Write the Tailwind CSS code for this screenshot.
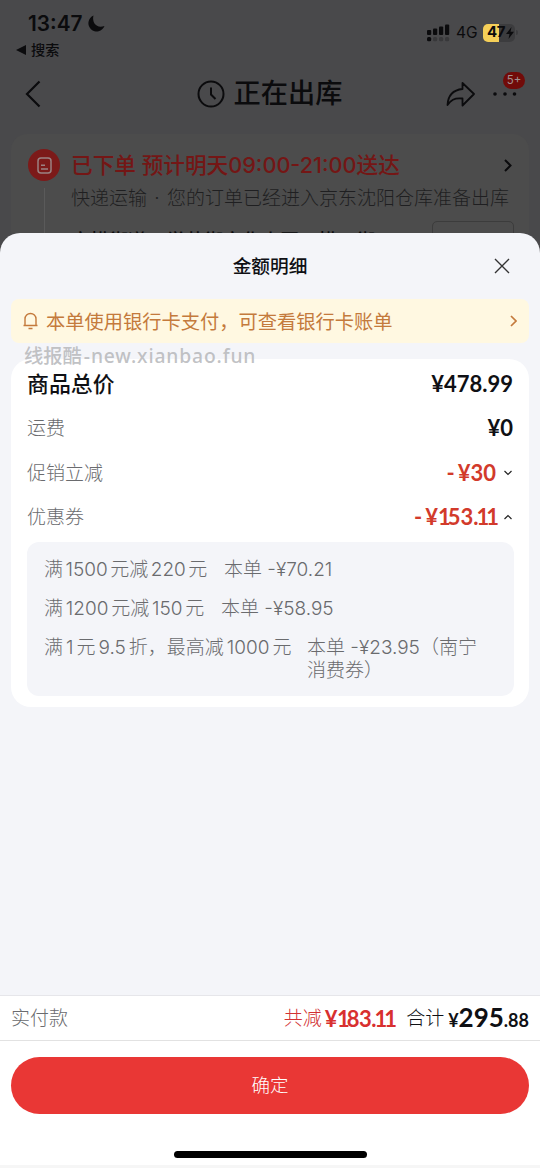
<!DOCTYPE html>
<html lang="zh-CN">
<head>
<meta charset="utf-8">
<title>金额明细</title>
<script src="https://cdn.jsdelivr.net/npm/@tailwindcss/browser@4"></script>
</head>
<body class="w-[540px] h-[1168px] overflow-hidden bg-[#49494b] flex flex-col whitespace-nowrap font-['Inter','Noto_Sans_CJK_SC',sans-serif]">
<!-- dimmed order page -->
<div class="h-[233px] shrink-0 flex flex-col text-[#0b0b0d]">
  <div class="h-[64px] shrink-0 flex justify-between">
    <div class="flex flex-col pt-[11px]">
      <div class="flex items-center h-[25px] pl-[28px] gap-[4px]">
        <span class="text-[20.800px] font-semibold w-[56px]">13:47</span>
        <svg width="17" height="17" viewBox="0 0 17 17"><path d="M5.500 0.500A8.300 8.300 0 1 0 16.500 11C12 12.500 8.500 11.500 6.500 8.500C5 6 4.800 3 5.500 0.500Z" fill="currentColor"/></svg>
      </div>
      <div class="flex items-center h-[28px] pl-[16px] gap-[5px] text-[14.200px] font-medium">
        <svg width="10" height="10" viewBox="0 0 10 10"><path d="M0 5L10 0V10Z" fill="currentColor"/></svg>
        <span>搜索</span>
      </div>
    </div>
    <div class="flex items-center h-[65px] pr-[22px]">
      <svg width="23" height="18" viewBox="0 0 23 18" fill="currentColor"><rect x="0" y="6" width="4.2" height="5" rx="1"/><rect x="6" y="4.5" width="4.2" height="6.500" rx="1"/><rect x="12" y="2.500" width="4.2" height="8.500" rx="1"/><rect x="18" y="0.500" width="4.200" height="10.500" rx="1"/><rect x="0" y="13" width="4.200" height="4.200" rx="1.500"/><g fill="#38383a"><rect x="6" y="13" width="4.200" height="4.200" rx="1.500"/><rect x="12" y="13" width="4.200" height="4.200" rx="1.500"/><rect x="18" y="13" width="4.200" height="4.200" rx="1.500"/></g></svg>
      <span class="text-[15.500px] ml-[6px] w-[21px] mr-[6px]">4G</span>
      <div class="w-[32px] h-[18px] rounded-[5px] flex items-center bg-linear-to-r from-[#f5cf58] from-50% to-[#3c3c3e] to-50% pl-[4px] text-[#0b0b0d]">
        <span class="text-[15px] font-bold tracking-[-0.5px]">47</span>
        <svg class="ml-px" width="8" height="12" viewBox="0 0 8 12"><path d="M5.500 0L0 7H3.500L2.500 12L8 4.800H4.500Z" fill="currentColor"/></svg>
      </div>
      <div class="w-[2px] h-[5px] ml-[1px] rounded-r bg-[#3c3c3e]"></div>
    </div>
  </div>
  <div class="relative h-[60px] shrink-0 flex items-center justify-between pl-[25px] pr-[23px]">
    <svg width="16" height="28" viewBox="0 0 16 28" fill="none" stroke="currentColor" stroke-width="2.200"><path d="M14.500 1.500L2 14L14.500 26.500"/></svg>
    <div class="flex items-center gap-[9px] ml-[52px]">
      <svg width="28" height="28" viewBox="0 0 28 28" fill="none" stroke="currentColor" stroke-width="2"><circle cx="14" cy="14" r="12.500"/><path d="M14 7.500V14.500L18.500 19"/></svg>
      <span class="text-[27.200px] font-medium">正在出库</span>
    </div>
    <div class="flex items-center gap-[18px]">
      <svg width="29" height="26" viewBox="0 0 29 26" fill="none" stroke="currentColor" stroke-width="1.800" stroke-linejoin="round"><path d="M16.500 2L28 13L16.500 24.500V17.500C8 16.500 4.500 19.500 1.500 24C2 14.500 7 9 16.500 8Z"/></svg>
      <svg width="24" height="6" viewBox="0 0 24 6" fill="currentColor"><circle cx="2" cy="3" r="1.800"/><circle cx="12" cy="3" r="1.800"/><circle cx="21.500" cy="3" r="1.800"/></svg>
    </div>
    <div class="absolute left-[503px] top-[8px] w-[22px] h-[17px] rounded-full bg-[#710b09] text-[#a09090] text-[11.500px] flex items-center justify-center">5+</div>
  </div>
  <div class="mx-[11px] mt-[10px] h-[99px] rounded-t-[16px] bg-[#4c4c4c] flex overflow-hidden pl-[17px]">
    <div class="w-[43px] shrink-0 flex flex-col items-start pt-[15px]">
      <div class="size-[32px] shrink-0 rounded-full bg-[#7c1a19] flex items-center justify-center">
        <svg width="15" height="17" viewBox="0 0 15 17" fill="none" stroke="#9b8282" stroke-width="1.500"><rect x="1" y="1" width="13" height="15" rx="3"/><path d="M4 8.300H8M4 12H11"/></svg>
      </div>
      <div class="w-px h-[60px] bg-[#5a5a5a] ml-[16px] mt-[7px]"></div>
    </div>
    <div class="flex flex-col w-[442px]">
      <div class="flex items-center justify-between h-[34px] mt-[15px]">
        <span class="text-[21.650px] font-medium text-[#741615]">已下单 预计明天09:00-21:00送达</span>
        <svg class="mr-px" width="8" height="13" viewBox="0 0 8 13" fill="none" stroke="currentColor" stroke-width="2"><path d="M1 1L6.500 6.500L1 12"/></svg>
      </div>
      <div class="h-[32px] mt-[4px] flex items-center text-[19px] font-light text-[#1f1f21]">快递运输<span class="w-[20px] text-center">·</span>您的订单已经进入京东沈阳仓库准备出库</div>
      <div class="flex justify-between mt-[7px] -mr-px">
        <span class="text-[19px] leading-[28px] font-medium mt-[7px]">文横街道　学苑街文化小区　横一街</span>
        <div class="w-[82px] shrink-0 h-[30px] border border-[#3c3c3c] rounded-[5px]"></div>
      </div>
    </div>
  </div>
</div>
<!-- amount sheet -->
<div class="relative flex-1 flex flex-col bg-[#f4f5f9] rounded-t-[20px] text-[#0f1014]">
  <div class="h-[66px] shrink-0 grid grid-cols-[1fr_auto_1fr] items-center">
    <span></span>
    <span class="text-[18.700px] font-medium pt-[2px]">金额明细</span>
    <svg class="justify-self-end mr-[30px]" width="16" height="16" viewBox="0 0 16 16" fill="none" stroke="#333" stroke-width="1.400"><path d="M1 1L15 15M15 1L1 15"/></svg>
  </div>
  <div class="mx-[11px] h-[44px] shrink-0 rounded-[8px] bg-[#fff8e1] flex items-center text-[#c47a3c] pl-[12px] pr-[12px]">
    <svg width="15" height="18" viewBox="0 0 15 18" fill="none" stroke="currentColor" stroke-width="1.400"><path d="M0.500 13.500H14.500M2 13.500V7A5.500 5.500 0 0 1 13 7V13.500M5.500 16.500H9.500"/></svg>
    <span class="text-[19.250px] ml-[8px] pt-[2px]">本单使用银行卡支付，可查看银行卡账单</span>
    <svg class="ml-auto" width="7" height="12" viewBox="0 0 7 12" fill="none" stroke="currentColor" stroke-width="1.700"><path d="M1 1L6 6L1 11"/></svg>
  </div>
  <div class="mx-[11px] mt-[16px] h-[348px] shrink-0 rounded-[20px] bg-white pl-[16px] pr-[15px] pt-[3px] text-[19px] text-[#6a6b6e]">
    <div class="h-[44px] flex items-center justify-between pr-px"><span class="text-[21.900px] font-medium text-[#0f1014]">商品总价</span><span class="font-['Lato'] font-bold text-[22px] leading-none text-[#0f1014]">¥478.99</span></div>
    <div class="h-[44px] flex items-center justify-between pr-px"><span class="font-light pt-[2px]">运费</span><span class="font-['Lato'] font-bold text-[22px] leading-none text-[#0f1014]">¥0</span></div>
    <div class="h-[45px] flex items-center pr-[2px]"><span class="font-light pt-[3px]">促销立减</span><span class="ml-auto font-['Lato'] font-bold text-[22px] text-[#d23a2b]">-<span class="ml-[3px]">¥30</span></span><svg class="ml-[8px]" width="8" height="6" viewBox="0 0 8 6" fill="none" stroke="#222" stroke-width="1.200"><path d="M0.500 1L4 4.500L7.500 1"/></svg></div>
    <div class="h-[44px] flex items-center pr-[2px]"><span class="font-light pt-[2px]">优惠券</span><span class="ml-auto font-['Lato'] font-bold text-[22px] leading-none text-[#d23a2b]">-<span class="ml-[3px] -mr-[2px]">¥<span class="tracking-[-3px]">1</span>53<span class="tracking-[-2px]">.</span><span class="tracking-[-3px]">11</span></span></span><svg class="ml-[10px]" width="8" height="6" viewBox="0 0 8 6" fill="none" stroke="#222" stroke-width="1.200"><path d="M0.500 5L4 1.500L7.500 5"/></svg></div>
    <div class="mt-[3px] h-[154px] rounded-[12px] bg-[#f4f5f9] pl-[17px] pt-[9px] font-light">
      <div class="h-[39px] flex items-center"><span class="w-[180px]">满<span class="mx-[2.500px]">1500</span>元减<span class="mx-[2.500px]">220</span>元</span><span>本单 -¥70.21</span></div>
      <div class="h-[39px] flex items-center"><span class="w-[177px]">满<span class="mx-[2.750px]">1200</span>元减<span class="mx-[2.750px]">150</span>元</span><span>本单 -¥58.95</span></div>
      <div class="flex pt-[7px] leading-[23px]"><span class="w-[263px] shrink-0">满<span class="mx-[3px]">1</span>元<span class="mx-[3px]">9.5</span>折，最高减<span class="mx-[3px]">1000</span>元</span><span>本单 -¥23.95（南宁<br>消费券）</span></div>
    </div>
  </div>
  <div class="mt-auto bg-white shrink-0 h-[173px] border-t border-[#e6e6ea] flex flex-col items-center">
    <div class="w-full h-[45px] border-b border-[#e2e2e2] px-[11px] flex items-center text-[19px]">
      <span class="font-light text-[#6a6b6e] pt-[3px]">实付款</span>
      <span class="ml-auto pt-[3px] font-light text-[#d23133]">共减</span><span class="ml-[3px] font-['Lato'] font-bold text-[22px] tracking-[-0.500px] text-[#d8302f]">¥<span class="tracking-[-3px]">1</span>83<span class="tracking-[-2px]">.</span><span class="tracking-[-3px]">11</span></span>
      <span class="ml-[12px] pt-[3px] font-light">合计</span><span class="ml-[4px] font-['Lato'] font-bold text-[18px] leading-none pb-[2px]">¥<span class="text-[26px] leading-none">295</span>.88</span>
    </div>
    <div class="mt-[16px] w-[518px] h-[57px] rounded-full bg-[#e93735] text-white text-[18.500px] font-light flex items-center justify-center">确定</div>
    <div class="mt-[37px] w-[193px] h-[7px] rounded-full bg-black"></div>
    <div class="mt-auto w-full h-[3px] bg-[#f6f6f6]"></div>
  </div>
  <div class="absolute left-[24px] top-[109px] h-[28px] flex items-center text-[19.300px] font-medium text-[#b9babd]/90 font-['Noto_Sans','Noto_Sans_CJK_SC',sans-serif]">线报酷<span class="ml-[2px] tracking-[0.850px]">-new.xianbao.fun</span></div>
</div>
</body>
</html>
